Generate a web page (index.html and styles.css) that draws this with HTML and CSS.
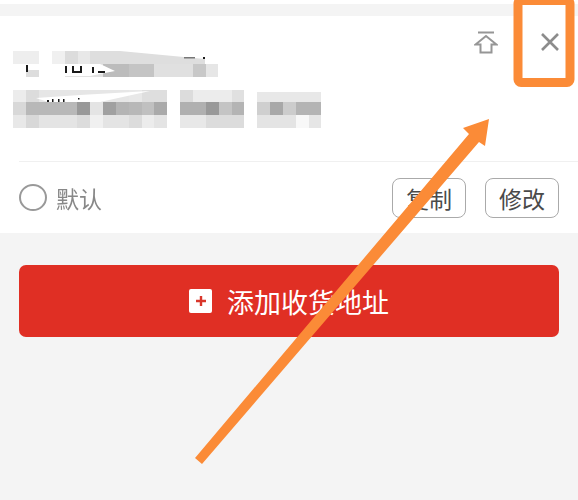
FILE: index.html
```html
<!DOCTYPE html>
<html lang="zh-CN">
  <head>
    <meta charset="UTF-8" />
    <meta name="viewport" content="width=device-width, initial-scale=1.0" />
    <title>收货地址</title>
    <link rel="stylesheet" href="styles.css">
  </head>

  <body>
    <div class="top-strip"></div>

    <div class="card">
      <div class="address">
        <!-- mosaic over the name and address -->
        <svg class="mosaic" width="370" height="95" viewBox="0 40 370 95">
          <!-- name row -->
          <rect x="13" y="51" width="26" height="13" fill="#eeeeee" />
          <rect x="52" y="51" width="13" height="13" fill="#f0f0f0" />
          <rect x="65" y="51" width="13" height="13" fill="#dcdcdc" />
          <rect x="78" y="51" width="12" height="13" fill="#e8e8e8" />
          <path d="M90 51H120L205 59V64H90Z" fill="#dedede" />
          <rect x="26" y="70" width="13" height="7" fill="#dddddd" />
          <rect x="65" y="64" width="38" height="13" fill="#e2e2e2" />
          <rect x="103" y="64" width="26" height="13" fill="#bcbcbc" />
          <rect x="129" y="64" width="25" height="13" fill="#c4c4c4" />
          <rect x="154" y="64" width="39" height="13" fill="#e0e0e0" />
          <rect x="193" y="64" width="13" height="13" fill="#c8c8c8" />
          <rect x="206" y="64" width="12" height="13" fill="#e6e6e6" />
          <path d="M39 64H100L115 71L90 76H39Z" fill="#ffffff" />
          <g fill="#1a1a1a">
            <rect x="26" y="65" width="2" height="7" />
            <rect x="65" y="66" width="2" height="7" />
            <path d="M72 66H74V71H80V66H82V73H72Z" />
            <rect x="92" y="67" width="2" height="6" />
            <rect x="98" y="71" width="7" height="2" />
            <rect x="184" y="57" width="11" height="1.500" fill="#777777" />
            <rect x="203" y="57" width="2" height="2" />
          </g>

          <!-- address rows -->
          <rect x="13" y="90" width="13" height="12" fill="#ececec" />
          <rect x="26" y="90" width="13" height="12" fill="#dcdcdc" />
          <rect x="39" y="90" width="90" height="12" fill="#e6e6e6" />
          <rect x="129" y="90" width="13" height="12" fill="#e8e8e8" />
          <rect x="142" y="90" width="25" height="12" fill="#dedede" />
          <rect x="180" y="90" width="13" height="12" fill="#dcdcdc" />
          <rect x="193" y="90" width="39" height="12" fill="#ececec" />
          <rect x="232" y="90" width="12" height="12" fill="#e0e0e0" />
          <rect x="257" y="92" width="64" height="10" fill="#e8e8e8" />
          <path d="M36 98L80 95L150 91L100 102H48Z" fill="#ffffff" />
          <g fill="#1a1a1a">
            <rect x="47" y="100" width="2" height="2" />
            <rect x="52" y="99" width="1.500" height="3" />
            <rect x="58" y="99" width="1.500" height="3" />
            <rect x="63" y="99" width="1.500" height="3" />
            <rect x="78" y="98" width="1.500" height="1.500" />
          </g>

          <rect x="13" y="102" width="13" height="13" fill="#d8d8d8" />
          <rect x="26" y="102" width="51" height="13" fill="#b8b8b8" />
          <rect x="77" y="102" width="13" height="13" fill="#999999" />
          <rect x="90" y="102" width="13" height="13" fill="#e4e4e4" />
          <rect x="103" y="102" width="13" height="13" fill="#a0a0a0" />
          <rect x="116" y="102" width="13" height="13" fill="#b4b4b4" />
          <rect x="129" y="102" width="13" height="13" fill="#b8b8b8" />
          <rect x="142" y="102" width="12" height="13" fill="#c0c0c0" />
          <rect x="154" y="102" width="13" height="13" fill="#aaaaaa" />
          <rect x="180" y="102" width="26" height="13" fill="#b0b0b0" />
          <rect x="206" y="102" width="13" height="13" fill="#999999" />
          <rect x="219" y="102" width="13" height="13" fill="#c4c4c4" />
          <rect x="232" y="102" width="12" height="13" fill="#b4b4b4" />
          <rect x="257" y="102" width="13" height="13" fill="#cfcfcf" />
          <rect x="270" y="102" width="13" height="13" fill="#a8a8a8" />
          <rect x="283" y="102" width="13" height="13" fill="#cccccc" />
          <rect x="296" y="102" width="25" height="13" fill="#b4b4b4" />

          <rect x="13" y="115" width="13" height="13" fill="#e8e8e8" />
          <rect x="26" y="115" width="13" height="13" fill="#d8d8d8" />
          <rect x="39" y="115" width="38" height="13" fill="#e4e4e4" />
          <rect x="77" y="115" width="13" height="13" fill="#dcdcdc" />
          <rect x="90" y="115" width="13" height="13" fill="#f0f0f0" />
          <rect x="103" y="115" width="26" height="13" fill="#e4e4e4" />
          <rect x="129" y="115" width="13" height="13" fill="#dcdcdc" />
          <rect x="142" y="115" width="12" height="13" fill="#ececec" />
          <rect x="154" y="115" width="13" height="13" fill="#e4e4e4" />
          <rect x="180" y="115" width="26" height="13" fill="#e8e8e8" />
          <rect x="206" y="115" width="38" height="13" fill="#dcdcdc" />
          <rect x="257" y="115" width="39" height="13" fill="#e4e4e4" />
          <rect x="296" y="115" width="13" height="13" fill="#f8f8f8" />
          <rect x="309" y="115" width="12" height="13" fill="#e6e6e6" />
        </svg>

        <!-- pin to top -->
        <svg class="pin-icon" width="24" height="24" viewBox="0 0 24 24">
          <path d="M4 2.500H20M12 6L1.500 14.500H6.500V22.500H17.500V14.500H22.500Z" fill="none" stroke="#969696" stroke-width="2" />
        </svg>
        <svg class="close-icon" width="20" height="20" viewBox="0 0 20 20">
          <path d="M2 2L18 18M18 2L2 18" fill="none" stroke="#8c8c8c" stroke-width="2.600" />
        </svg>
      </div>

      <div class="actions">
        <span class="radio"></span>
        <span class="default-label">默认</span>
        <button class="action-btn" type="button">复制</button>
        <button class="action-btn" type="button">修改</button>
      </div>
    </div>

    <div class="add-wrap">
      <button class="add-btn" type="button">
        <span class="plus-box">
          <svg width="12" height="12" viewBox="0 0 12 12">
            <path d="M6 1V11M1 6H11" stroke="#d9362b" stroke-width="2.400" />
          </svg>
        </span>
        添加收货地址
      </button>
    </div>

    <!-- annotation drawn over the screenshot -->
    <svg class="annotation" width="578" height="500" viewBox="0 0 578 500">
      <rect x="522" y="4" width="44" height="12" fill="#ffffff" />
      <path d="M195 458L202 464L479 142L485 146L489 119L463 128L469 134Z" fill="#fb8b37" />
      <rect x="518" y="0.500" width="52" height="82" rx="3" fill="none" stroke="#fb8b37" stroke-width="9" />
    </svg>
  </body>
</html>
```

FILE: styles.css
```css
body {
  margin: 0;
  padding: 0;
  height: 500px;
  overflow: hidden;
  position: relative;
  font-family: "Liberation Sans", "Noto Sans CJK SC", sans-serif;
  background-color: #f4f4f4;
}

.top-strip {
  height: 4px;
  background-color: #fff;
  margin-bottom: 12px;
}

.card {
  height: 217px;
  background-color: #fff;
  display: flex;
  flex-direction: column;
}

.address {
  height: 145px;
  margin-left: 19px;
  border-bottom: 1px solid #f0f0f0;
  position: relative;
}

.mosaic {
  position: absolute;
  left: -19px;
  top: 24px;
}

.pin-icon {
  position: absolute;
  left: 455px;
  top: 14px;
}

.close-icon {
  position: absolute;
  left: 521px;
  top: 16px;
}

.actions {
  flex: 1;
  display: flex;
  align-items: center;
  padding: 0 19px;
}

.radio {
  width: 28px;
  height: 27px;
  border: 2px solid #999;
  border-radius: 50%;
  box-sizing: border-box;
  margin-right: 9px;
}

.default-label {
  flex: 1;
  font-size: 23px;
  color: #888;
  filter: blur(0.4px);
}

.action-btn {
  width: 74px;
  height: 40px;
  margin-left: 19px;
  padding: 0;
  font-family: inherit;
  font-size: 23px;
  color: #4a4a4a;
  background-color: #fff;
  border: 1px solid #aaa;
  border-radius: 8px;
}

.add-wrap {
  padding: 32px 19px 0;
}

.add-btn {
  width: 100%;
  height: 72px;
  display: flex;
  justify-content: center;
  align-items: center;
  gap: 15px;
  padding: 0;
  font-family: inherit;
  font-size: 27px;
  color: #fff;
  background-color: #e02f24;
  border: none;
  border-radius: 7px;
}

.plus-box {
  width: 23px;
  height: 24px;
  display: flex;
  justify-content: center;
  align-items: center;
  background-color: #fff;
  border-radius: 2px;
}

.annotation {
  position: absolute;
  left: 0;
  top: 0;
}
```
